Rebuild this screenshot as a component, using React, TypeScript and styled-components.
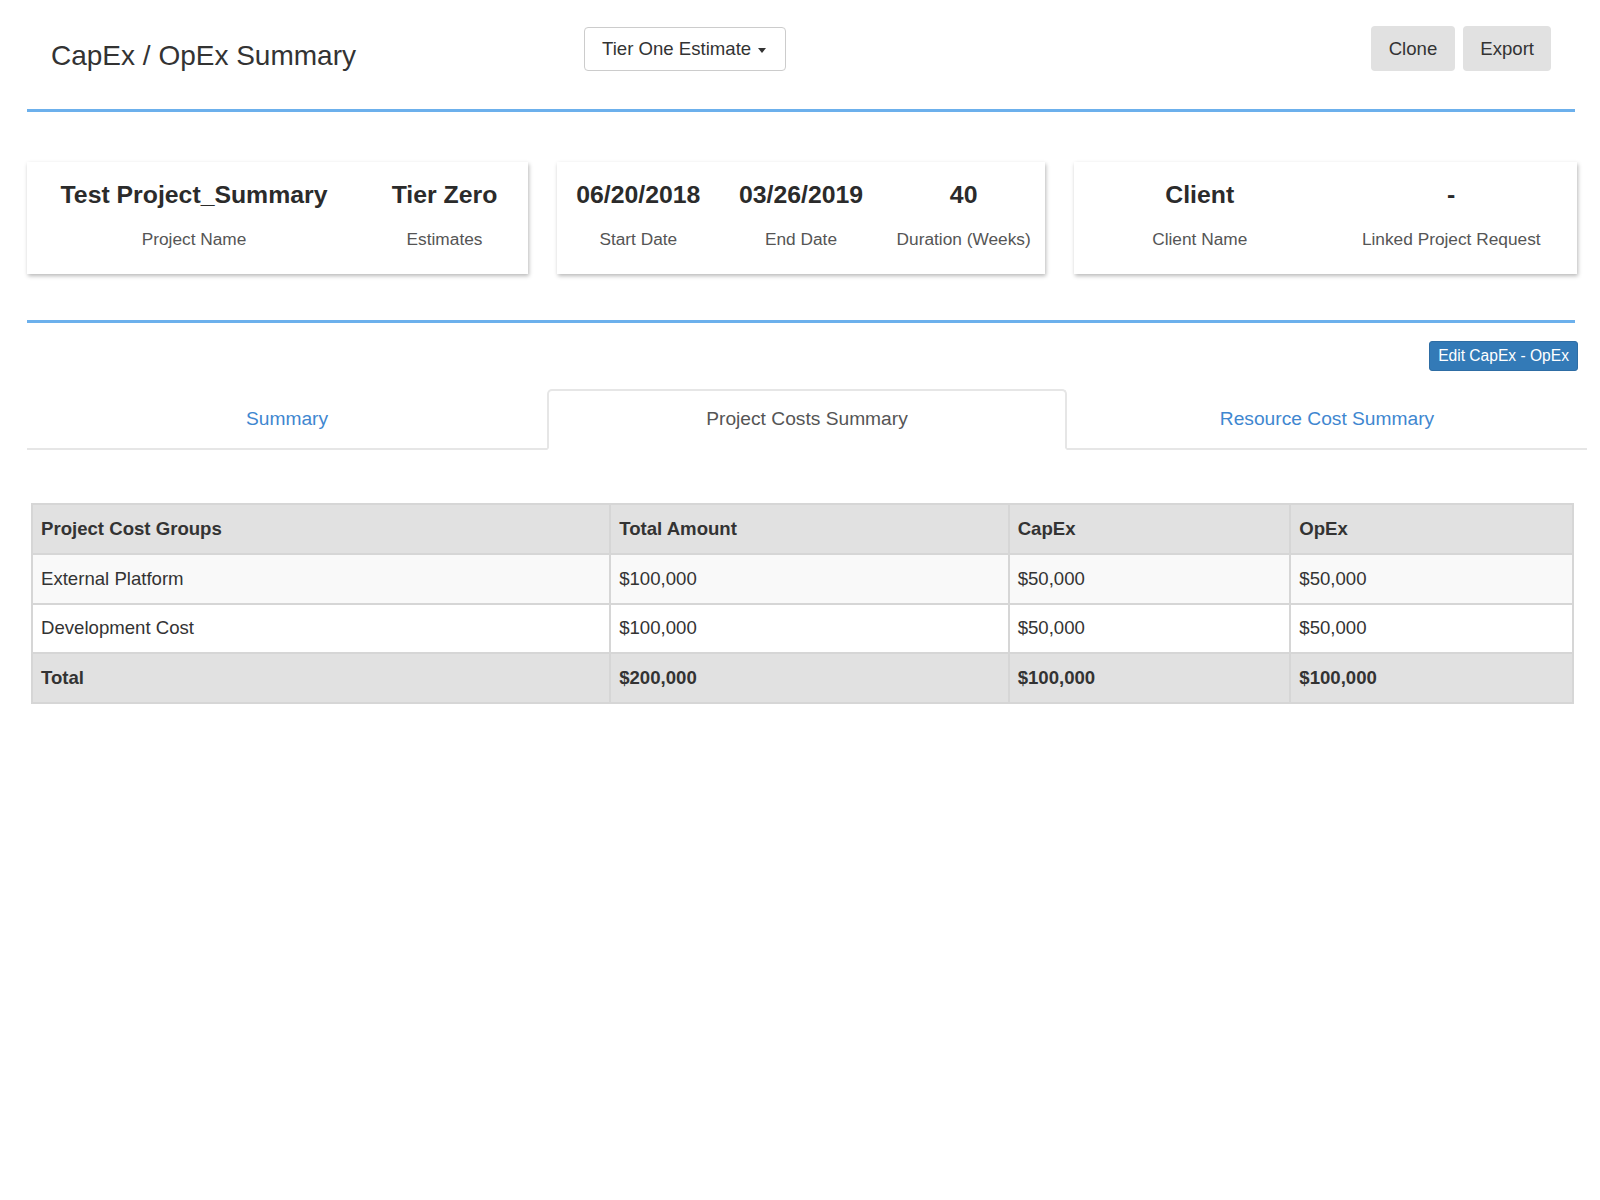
import React from "react";
import styled, { createGlobalStyle } from "styled-components";

const GlobalStyle = createGlobalStyle`
  body {
    margin: 0;
    background: #fff;
    font-family: "Liberation Sans", Arial, sans-serif;
    color: #333;
  }
  * {
    box-sizing: border-box;
  }
`;

const Page = styled.div`
  width: 1600px;
  padding: 0 13px 0 27px;
`;

const Header = styled.div`
  display: grid;
  grid-template-columns: 533px auto 1fr;
  align-items: start;
  height: 109px;
  margin-right: 12px;
  padding: 26px 24px 0;
`;

const Title = styled.h1`
  margin: 16px 0 0;
  font-size: 28px;
  line-height: 28px;
  font-weight: normal;
  color: #333;
`;

const Dropdown = styled.button`
  display: flex;
  align-items: center;
  height: 44px;
  margin-top: 1px;
  padding: 0 19px 0 17px;
  border: 1px solid #ccc;
  border-radius: 4px;
  background: #fff;
  font-family: inherit;
  font-size: 18.6px;
  color: #333;
`;

const Caret = styled.span`
  width: 0;
  height: 0;
  margin-left: 7px;
  margin-top: 2px;
  border-top: 5px solid #333;
  border-left: 4.5px solid transparent;
  border-right: 4.5px solid transparent;
`;

const Actions = styled.div`
  display: flex;
  justify-content: flex-end;
  gap: 8px;
`;

const GreyButton = styled.button`
  height: 45px;
  padding: 0 ${(p: { pad: number }) => p.pad}px;
  border: none;
  border-radius: 4px;
  background: #e1e1e1;
  font-family: inherit;
  font-size: 18.6px;
  color: #333;
`;

const BlueRule = styled.div`
  height: 3px;
  margin-right: 12px;
  background: #6cb0ec;
`;

const Cards = styled.div`
  display: grid;
  grid-template-columns: 501px 488px 503px;
  column-gap: 29px;
  margin: 50px 10px 46px 0;
`;

const Card = styled.div`
  display: grid;
  grid-template-columns: ${(p: { cols: string }) => p.cols};
  height: 112px;
  padding-top: 18px;
  background: #fff;
  box-shadow: 1px 2px 4px rgba(0, 0, 0, 0.28);
`;

const Stat = styled.div`
  display: flex;
  flex-direction: column;
  align-items: center;
`;

const StatValue = styled.div`
  font-size: 24.8px;
  line-height: 29px;
  font-weight: bold;
  color: #2b2b2b;
`;

const StatLabel = styled.div`
  margin-top: 20px;
  font-size: 17.3px;
  line-height: 21px;
  color: #555;
`;

const EditRow = styled.div`
  display: flex;
  justify-content: flex-end;
  margin: 18px 9px 18px 0;
`;

const EditButton = styled.button`
  height: 30px;
  padding: 0 8px;
  border: 1px solid #2e6da4;
  border-radius: 3px;
  background: #337ab7;
  font-family: inherit;
  font-size: 15.6px;
  color: #fff;
`;

const TabList = styled.div`
  display: grid;
  grid-template-columns: repeat(3, 1fr);
  border-bottom: 2px solid #e6e6e6;
`;

const Tab = styled.div`
  margin-bottom: -2px;
  padding: 17px 0 18px;
  border: 2px solid ${(p: { active?: boolean }) => (p.active ? "#e6e6e6" : "transparent")};
  border-bottom-color: ${(p: { active?: boolean }) => (p.active ? "#fff" : "transparent")};
  border-radius: 5px 5px 0 0;
  background: ${(p: { active?: boolean }) => (p.active ? "#fff" : "transparent")};
  text-align: center;
  font-size: 19.2px;
  line-height: 22px;
  color: ${(p: { active?: boolean }) => (p.active ? "#555" : "#3f87d0")};
`;

const Table = styled.table`
  width: 1543px;
  margin: 53px 0 0 4px;
  border-collapse: collapse;
  font-size: 18.6px;
  color: #333;
`;

const Row = styled.tr`
  background: ${(p: { bg: string }) => p.bg};
`;

const Th = styled.th`
  height: 49.75px;
  padding: 0 8px;
  border: 2px solid #d6d6d6;
  text-align: left;
  font-weight: bold;
`;

const Td = styled.td`
  height: 49.75px;
  padding: 0 8px;
  border: 2px solid #d6d6d6;
  font-weight: ${(p: { strong?: boolean }) => (p.strong ? "bold" : "normal")};
`;

const columns = [
  { label: "Project Cost Groups", width: 579 },
  { label: "Total Amount", width: 399 },
  { label: "CapEx", width: 282 },
  { label: "OpEx", width: 283 },
];

const rows = [
  { cells: ["External Platform", "$100,000", "$50,000", "$50,000"], bg: "#f9f9f9" },
  { cells: ["Development Cost", "$100,000", "$50,000", "$50,000"], bg: "#fff" },
];

const total = ["Total", "$200,000", "$100,000", "$100,000"];

export default function App() {
  return (
    <Page>
      <GlobalStyle />
      <Header>
        <Title>CapEx / OpEx Summary</Title>
        <Dropdown>
          Tier One Estimate
          <Caret />
        </Dropdown>
        <Actions>
          <GreyButton pad={18}>Clone</GreyButton>
          <GreyButton pad={17}>Export</GreyButton>
        </Actions>
      </Header>
      <BlueRule />

      <Cards>
        <Card cols="2fr 1fr">
          <Stat>
            <StatValue>Test Project_Summary</StatValue>
            <StatLabel>Project Name</StatLabel>
          </Stat>
          <Stat>
            <StatValue>Tier Zero</StatValue>
            <StatLabel>Estimates</StatLabel>
          </Stat>
        </Card>
        <Card cols="1fr 1fr 1fr">
          <Stat>
            <StatValue>06/20/2018</StatValue>
            <StatLabel>Start Date</StatLabel>
          </Stat>
          <Stat>
            <StatValue>03/26/2019</StatValue>
            <StatLabel>End Date</StatLabel>
          </Stat>
          <Stat>
            <StatValue>40</StatValue>
            <StatLabel>Duration (Weeks)</StatLabel>
          </Stat>
        </Card>
        <Card cols="1fr 1fr">
          <Stat>
            <StatValue>Client</StatValue>
            <StatLabel>Client Name</StatLabel>
          </Stat>
          <Stat>
            <StatValue>-</StatValue>
            <StatLabel>Linked Project Request</StatLabel>
          </Stat>
        </Card>
      </Cards>
      <BlueRule />

      <EditRow>
        <EditButton>Edit CapEx - OpEx</EditButton>
      </EditRow>

      <TabList>
        <Tab>Summary</Tab>
        <Tab active>Project Costs Summary</Tab>
        <Tab>Resource Cost Summary</Tab>
      </TabList>

      <Table>
        <thead>
          <Row bg="#e1e1e1">
            {columns.map((c) => (
              <Th key={c.label} style={{ width: c.width }}>
                {c.label}
              </Th>
            ))}
          </Row>
        </thead>
        <tbody>
          {rows.map((r) => (
            <Row key={r.cells[0]} bg={r.bg}>
              {r.cells.map((cell, i) => (
                <Td key={i}>{cell}</Td>
              ))}
            </Row>
          ))}
          <Row bg="#e1e1e1">
            {total.map((cell, i) => (
              <Td key={i} strong>
                {cell}
              </Td>
            ))}
          </Row>
        </tbody>
      </Table>
    </Page>
  );
}
